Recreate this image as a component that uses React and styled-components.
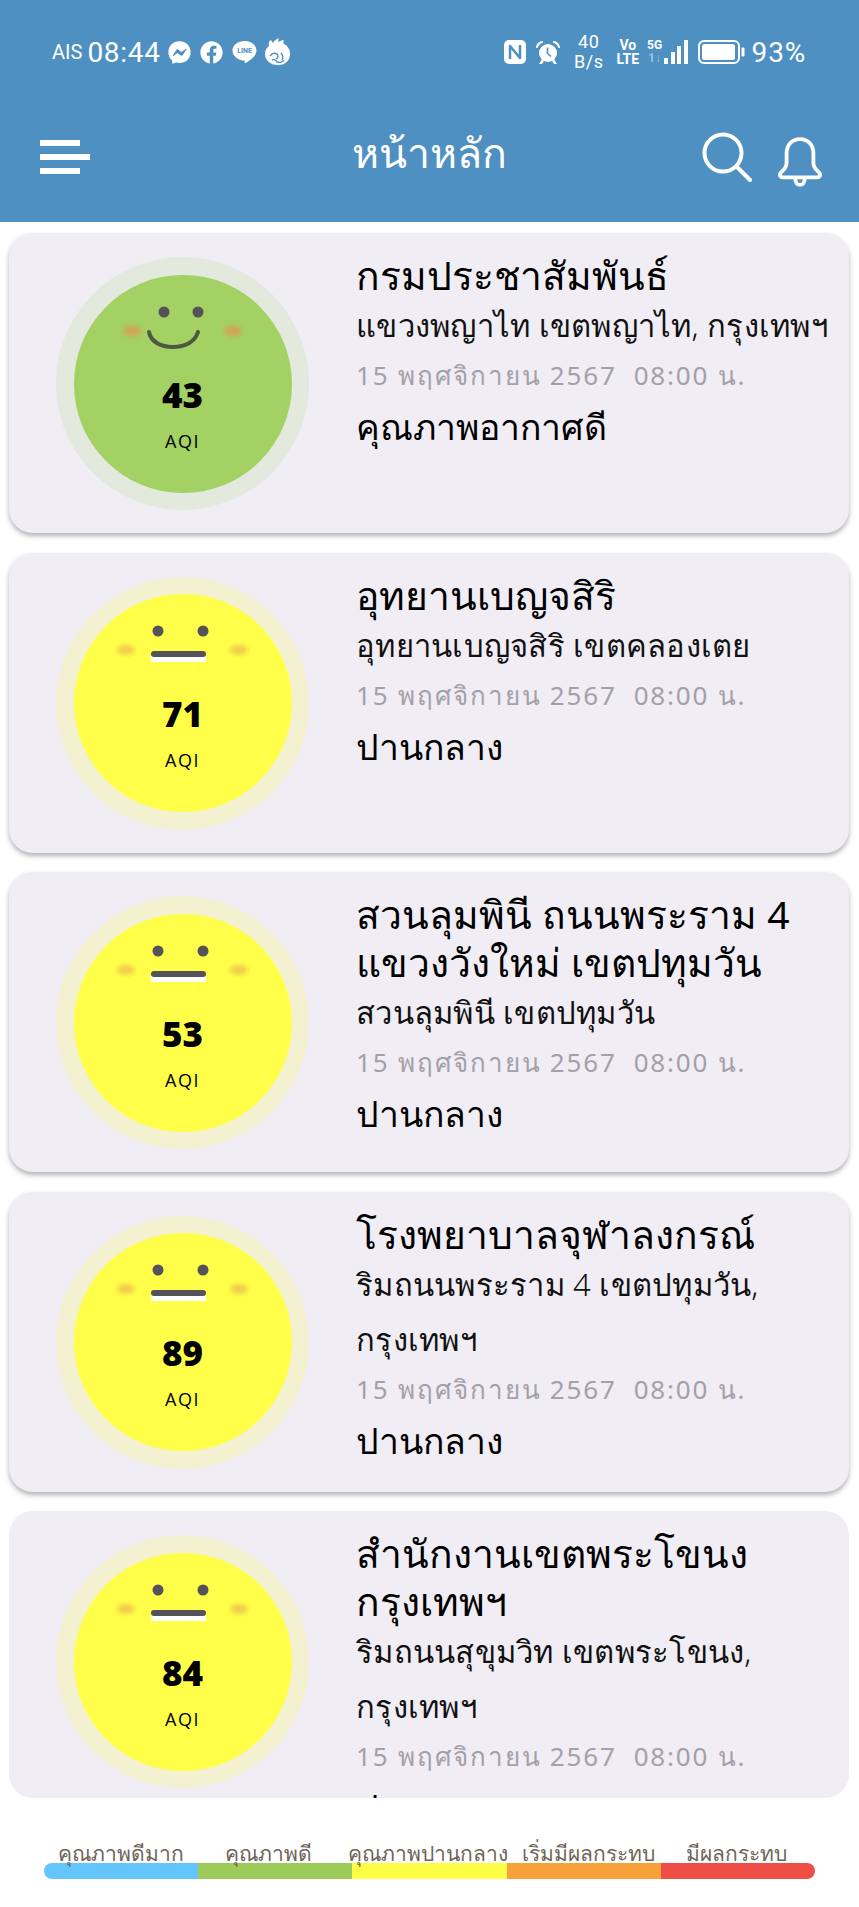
import React from "react";
import styled, { createGlobalStyle } from "styled-components";
import { FaFacebookMessenger, FaFacebook } from "react-icons/fa";

const THAI = `"Noto Sans", "Open Sans", sans-serif`;

const GlobalStyle = createGlobalStyle`
  html, body {
    margin: 0;
    padding: 0;
    height: 100%;
    overflow: hidden;
    background: #fff;
  }
  * { box-sizing: border-box; }
`;

const Page = styled.div`
  width: 859px;
  height: 1907px;
  display: flex;
  flex-direction: column;
  font-family: ${THAI};
  background: #fff;
`;

const Header = styled.header`
  height: 222px;
  flex-shrink: 0;
  background: #4f90c3;
  color: #fff;
  display: flex;
  flex-direction: column;
`;

const StatusBar = styled.div`
  height: 68px;
  margin: 18px 0 16px;
  padding: 0 53px 0 52px;
  display: flex;
  align-items: center;
  justify-content: space-between;
`;

const StatusGroup = styled.div`
  display: flex;
  align-items: center;
`;

const Carrier = styled.span`
  font: 400 20px "Roboto", sans-serif;
  margin-right: 5px;
`;

const Clock = styled.span`
  font: 400 28px "Roboto", sans-serif;
  letter-spacing: 0.7px;
  margin-right: 7px;
`;

const AppSlot = styled.span`
  display: flex;
  margin-right: ${(p) => p.$gap || 0}px;
`;

const Speed = styled.span`
  font: 400 18px/20px "Roboto", sans-serif;
  text-align: center;
  margin: 0 13px 0 14px;
  letter-spacing: 0.5px;
`;

const NetText = styled.span`
  font: 700 14px/14px "Roboto", sans-serif;
  text-align: center;
  margin-right: 8px;
`;

const FiveG = styled.span`
  font: 700 12px/13px "Roboto", sans-serif;
  text-align: center;
`;

const Dim = styled.span`
  opacity: 0.45;
`;

const Signal = styled.div`
  display: flex;
  align-items: flex-end;
  gap: 2.5px;
  height: 24px;
  margin: 0 10px 0 2px;
`;

const SignalBar = styled.i`
  width: 4px;
  height: ${(p) => p.$h}px;
  background: #fff;
`;

const Percent = styled.span`
  font: 400 28px "Roboto", sans-serif;
  letter-spacing: 0.8px;
  margin-left: 7px;
`;

const TopBar = styled.div`
  flex: 1;
  padding: 0 0 10px 40px;
  display: flex;
  align-items: center;
`;

const Burger = styled.div`
  width: 50px;
  display: flex;
  flex-direction: column;
  gap: 8px;
`;

const BurgerLine = styled.i`
  display: block;
  height: 6px;
  width: ${(p) => (p.$long ? 50 : 40)}px;
  background: #fff;
`;

const Title = styled.h1`
  flex: 1;
  margin: -8px 0 0;
  padding-left: 66px;
  text-align: center;
  font: 400 41px ${THAI};
`;

const TopIcons = styled.div`
  display: flex;
  align-items: center;
  gap: 26px;
  padding-right: 37px;
`;

const BellSlot = styled.span`
  display: flex;
  margin-top: 10px;
`;

const List = styled.main`
  height: 1576px;
  flex-shrink: 0;
  padding: 11px 10px 0 9px;
  display: flex;
  flex-direction: column;
  gap: 19.5px;
`;

const Card = styled.article`
  flex-shrink: 0;
  height: 300px;
  display: flex;
  background: #f1edf5;
  border-radius: 24px;
  box-shadow: 0 3px 5px rgba(0, 0, 0, 0.3);
  overflow: hidden;

  &:last-child {
    height: 287px;
    box-shadow: none;
  }
`;

const Halo = styled.div`
  width: 253px;
  height: 253px;
  margin: 24px 0 0 47px;
  flex-shrink: 0;
  border-radius: 50%;
  display: flex;
  align-items: center;
  justify-content: center;
  background: ${(p) => p.$halo};
`;

const Disc = styled.div`
  width: 218px;
  height: 218px;
  border-radius: 50%;
  padding-top: 25px;
  display: flex;
  flex-direction: column;
  align-items: center;
  background: ${(p) => p.$color};
`;

const Aqi = styled.div`
  margin-top: 5px;
  font: 800 35px/40px "Open Sans", sans-serif;
  color: #000;
`;

const AqiLabel = styled.div`
  margin-top: 15px;
  font: 400 18px/22px "Open Sans", sans-serif;
  letter-spacing: 1.5px;
  color: #000;
`;

const Info = styled.div`
  flex: 1;
  min-width: 0;
  padding: 18px 8px 0 47px;
  color: #000;
`;

const Name = styled.div`
  font-size: 39px;
  line-height: 48px;
  font-weight: 400;
`;

const Address = styled.div`
  margin: -1px 0 -6px;
  font-size: 31px;
  letter-spacing: 0.25px;
  line-height: 55px;
  font-weight: 300;
  color: #111;
`;

const Stamp = styled.div`
  margin-top: 4px;
  font-size: 26px;
  line-height: 48px;
  letter-spacing: 1.8px;
  white-space: pre;
  color: #a3a1a7;
`;

const Quality = styled.div`
  margin-top: 3px;
  font-size: 35.5px;
  line-height: 48px;
`;

const Legend = styled.footer`
  flex: 1;
  padding: 40px 44px 0 44px;
`;

const LegendLabels = styled.div`
  display: grid;
  grid-template-columns: repeat(5, 1fr);
  height: 25px;
`;

const LegendLabel = styled.span`
  text-align: center;
  font-size: 21px;
  font-weight: 500;
  line-height: 30px;
  white-space: nowrap;
  color: #6d6459;
  transform: translateX(${(p) => p.$shift || 0}px);
`;

const LegendBar = styled.div`
  display: grid;
  grid-template-columns: repeat(5, 1fr);
  height: 16px;
  border-radius: 8px;
  overflow: hidden;
`;

const LegendSwatch = styled.i`
  background: ${(p) => p.$color};
`;

const Face = ({ mood }) => {
  const happy = mood === "happy";
  return (
    <svg width="150" height="70" viewBox="0 0 150 70">
      <defs>
        <filter id="soft" x="-50%" y="-50%" width="200%" height="200%">
          <feGaussianBlur stdDeviation="2.5" />
        </filter>
      </defs>
      <ellipse cx={happy ? 24 : 18} cy="31" rx="9" ry="5" fill="#e2964f" opacity={happy ? 0.8 : 0.5} filter="url(#soft)" />
      <ellipse cx={happy ? 125 : 131} cy="31" rx="9" ry="5" fill="#e2964f" opacity={happy ? 0.8 : 0.5} filter="url(#soft)" />
      <circle cx={happy ? 56 : 50} cy="12" r="5.5" fill="#55525a" />
      <circle cx={happy ? 90 : 95} cy="12" r="5.5" fill="#55525a" />
      {happy ? (
        <path d="M41 32c2 10 12 15 24 15s22-5 25-15" fill="none" stroke="#4d5840" strokeWidth="4" strokeLinecap="round" />
      ) : (
        <>
          <rect x="43" y="37" width="55" height="6" fill="#fff" />
          <rect x="43" y="32" width="55" height="6" rx="3" fill="#55525a" />
        </>
      )}
    </svg>
  );
};

const LineBubble = () => (
  <svg width="25" height="24" viewBox="0 0 25 24">
    <path d="M12.5 1C19 1 24.5 5 24.5 10.5c0 5-5 9-11 12.5-.8.4-1-.2-.9-1l.2-1.4C6 20.6.5 16 .5 10.5.5 5 6 1 12.5 1Z" fill="#fff" />
    <text x="12.5" y="13" textAnchor="middle" fontFamily="Roboto, sans-serif" fontWeight="700" fontSize="7" fill="#4f90c3">LINE</text>
  </svg>
);

// Kasikorn crest, roughly: round body, feather tuft on top
const Kbank = () => (
  <svg width="27" height="28" viewBox="0 0 27 28">
    <path d="M5 8C4 5 5 3 7 2l2 3c1-2 3-4 6-5-1 2-1 3 0 4 1-1 3-2 5-2-1 2-1 3 0 4 4 2 6 6 6 10 0 6-4 11-12 11C6 27 1 22 1 16c0-3 1-6 4-8Z" fill="#fff" />
    <path d="M6 18c2-3 5-3 7-2 2 2 1 4-1 5M8 22c2-1 4 0 5 2 3 1 6 0 7-2M17 15c2 2 2 5 1 7" fill="none" stroke="#4f90c3" strokeWidth="1.4" />
  </svg>
);

const Nfc = () => (
  <svg width="22" height="24" viewBox="0 0 22 24">
    <rect width="22" height="24" rx="5" fill="#fff" />
    <path d="M6 19V6l10 12V5" fill="none" stroke="#4f90c3" strokeWidth="2.5" strokeLinejoin="round" />
  </svg>
);

const Alarm = () => (
  <svg width="24" height="24" viewBox="0 0 24 24">
    <circle cx="12" cy="13" r="9" fill="#fff" />
    <path d="M11.5 7.500v6l3.500 3" fill="none" stroke="#4f90c3" strokeWidth="1.6" />
    <path d="M0 8c0-4 3-7 7-7v1.500c-3 1-4.500 3-5.500 5.500zM24 8c0-4-3-7-7-7v1.500c3 1 4.500 3 5.500 5.500zM3 24l3-5 2 2-2 3zM21 24l-3-5-2 2 2 3z" fill="#fff" />
  </svg>
);

const Battery = () => (
  <svg width="47" height="24" viewBox="0 0 47 24">
    <rect x="1" y="1" width="40" height="22" rx="5" fill="none" stroke="#fff" strokeWidth="2" />
    <rect x="4" y="4" width="33" height="16" rx="2.5" fill="#fff" />
    <rect x="43.5" y="7.5" width="3" height="9" rx="1" fill="#fff" />
  </svg>
);

const SearchIcon = () => (
  <svg width="50" height="50" viewBox="0 0 50 50" fill="none" stroke="#fff" strokeWidth="4" strokeLinecap="round">
    <circle cx="21" cy="21" r="18.5" />
    <path d="M34.5 34.5L48 48" />
  </svg>
);

const BellIcon = () => (
  <svg width="44" height="50" viewBox="0 0 46 52" fill="none" stroke="#fff" strokeWidth="4" strokeLinejoin="round">
    <path d="M23 2c-9 0-14 7-14 15v10c0 5-3 7-6 10-2 2-1 5 2 5h36c3 0 4-3 2-5-3-3-6-5-6-10V17C37 9 32 2 23 2Z" />
    <path d="M18 43c0 4 2 7 5 7s5-3 5-7" />
  </svg>
);

const stations = [
  { name: "กรมประชาสัมพันธ์", address: "แขวงพญาไท เขตพญาไท, กรุงเทพฯ", aqi: 43, quality: "คุณภาพอากาศดี", good: true },
  { name: "อุทยานเบญจสิริ", address: "อุทยานเบญจสิริ เขตคลองเตย", aqi: 71, quality: "ปานกลาง" },
  { name: "สวนลุมพินี ถนนพระราม 4 แขวงวังใหม่ เขตปทุมวัน", address: "สวนลุมพินี เขตปทุมวัน", aqi: 53, quality: "ปานกลาง" },
  { name: "โรงพยาบาลจุฬาลงกรณ์", address: "ริมถนนพระราม 4 เขตปทุมวัน, กรุงเทพฯ", aqi: 89, quality: "ปานกลาง" },
  { name: "สำนักงานเขตพระโขนง กรุงเทพฯ", address: "ริมถนนสุขุมวิท เขตพระโขนง, กรุงเทพฯ", aqi: 84, quality: "ปานกลาง" },
];

const legend = [
  { label: "คุณภาพดีมาก", color: "#63c5fb", shift: 1 },
  { label: "คุณภาพดี", color: "#9ccb5a", shift: -5 },
  { label: "คุณภาพปานกลาง", color: "#fdfd46", shift: -2 },
  { label: "เริ่มมีผลกระทบ", color: "#f6a23a", shift: 3 },
  { label: "มีผลกระทบ", color: "#ee4e45", shift: -2 },
];

const App = () => (
  <Page>
    <GlobalStyle />
    <Header>
      <StatusBar>
        <StatusGroup>
          <Carrier>AIS</Carrier>
          <Clock>08:44</Clock>
          <AppSlot $gap={9}><FaFacebookMessenger size={23} /></AppSlot>
          <AppSlot $gap={9}><FaFacebook size={23} /></AppSlot>
          <AppSlot $gap={7}><LineBubble /></AppSlot>
          <Kbank />
        </StatusGroup>
        <StatusGroup>
          <AppSlot $gap={10}><Nfc /></AppSlot>
          <Alarm />
          <Speed>40<br />B/s</Speed>
          <NetText>Vo<br />LTE</NetText>
          <FiveG>5G<br /><Dim>1↓</Dim></FiveG>
          <Signal>
            <SignalBar $h={6} />
            <SignalBar $h={12} />
            <SignalBar $h={18} />
            <SignalBar $h={24} />
          </Signal>
          <Battery />
          <Percent>93%</Percent>
        </StatusGroup>
      </StatusBar>
      <TopBar>
        <Burger>
          <BurgerLine />
          <BurgerLine $long />
          <BurgerLine />
        </Burger>
        <Title>หน้าหลัก</Title>
        <TopIcons>
          <SearchIcon />
          <BellSlot><BellIcon /></BellSlot>
        </TopIcons>
      </TopBar>
    </Header>
    <List>
      {stations.map((s) => (
        <Card key={s.name}>
          <Halo $halo={s.good ? "#e3e9dc" : "#f3f1d0"}>
            <Disc $color={s.good ? "#a3d164" : "#ffff4a"}>
              <Face mood={s.good ? "happy" : "neutral"} />
              <Aqi>{s.aqi}</Aqi>
              <AqiLabel>AQI</AqiLabel>
            </Disc>
          </Halo>
          <Info>
            <Name>{s.name}</Name>
            <Address>{s.address}</Address>
            <Stamp>15 พฤศจิกายน 2567  08:00 น.</Stamp>
            <Quality>{s.quality}</Quality>
          </Info>
        </Card>
      ))}
    </List>
    <Legend>
      <LegendLabels>
        {legend.map((l) => (
          <LegendLabel key={l.label} $shift={l.shift}>{l.label}</LegendLabel>
        ))}
      </LegendLabels>
      <LegendBar>
        {legend.map((l) => (
          <LegendSwatch key={l.label} $color={l.color} />
        ))}
      </LegendBar>
    </Legend>
  </Page>
);

export default App;
